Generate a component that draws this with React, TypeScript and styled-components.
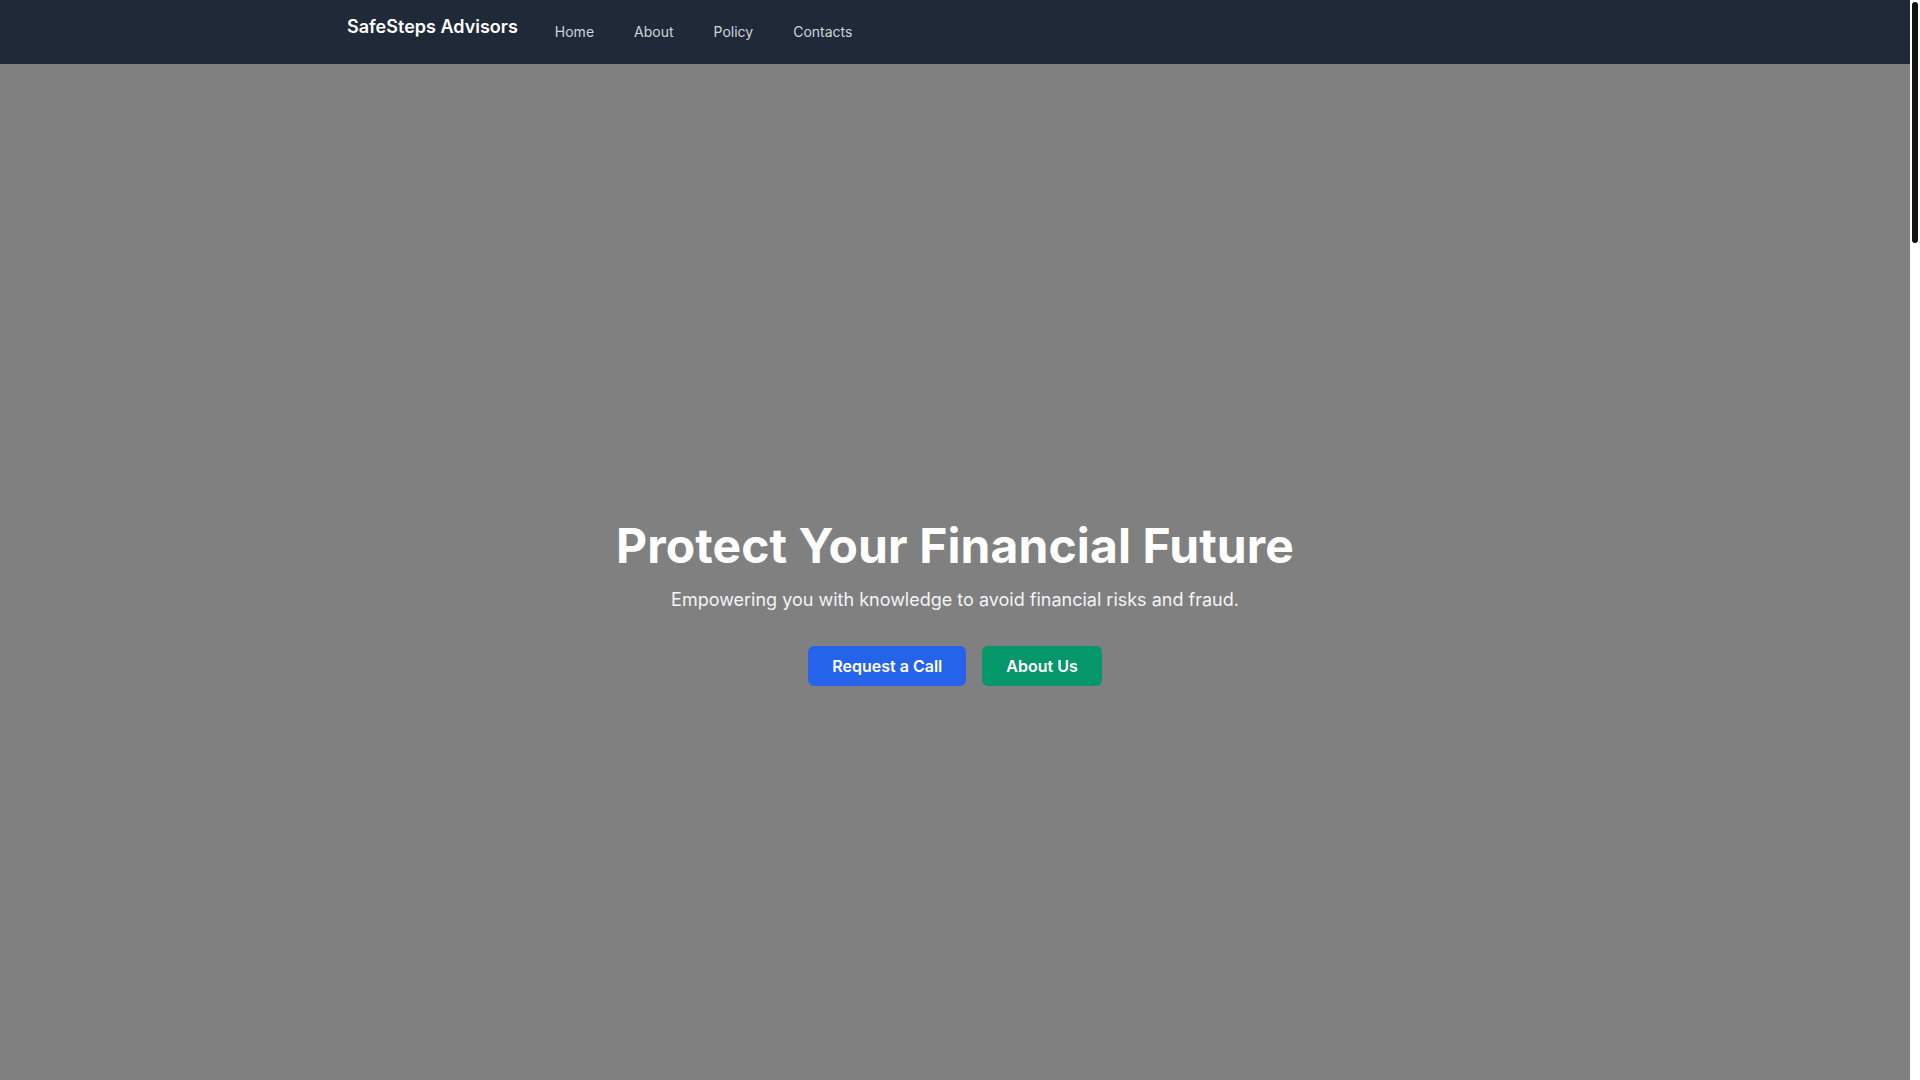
import React from "react";
import styled, { createGlobalStyle } from "styled-components";

const GlobalStyle = createGlobalStyle`
  html, body {
    margin: 0;
    padding: 0;
    height: 100%;
    overflow: hidden;
  }
  body {
    font-family: Inter, "Noto Sans", "Liberation Sans", sans-serif;
    background: #ffffff;
    color: #111827;
    -webkit-font-smoothing: antialiased;
  }
  * { box-sizing: border-box; }
`;

const Page = styled.div`
  display: flex;
  height: 100vh;
  overflow: hidden;
`;

const Main = styled.main`
  flex: 1;
  min-width: 0;
  height: 100vh;
  overflow: hidden;
`;

const ScrollGutter = styled.div`
  width: 10px;
  flex: none;
  height: 100vh;
  background: #ffffff;
  padding: 2px;
`;

const ScrollThumb = styled.div`
  width: 6px;
  height: 241px;
  border-radius: 3px;
  background: #111111;
`;

const Header = styled.header`
  background: #1f2937;
  height: 64px;
`;

const HeaderInner = styled.div`
  max-width: 1280px;
  height: 100%;
  margin: 0 auto;
  padding: 0 32px;
  display: flex;
  align-items: center;
`;

const Logo = styled.a`
  color: #ffffff;
  font-size: 18px;
  line-height: 28px;
  font-weight: 600;
  text-decoration: none;
  margin-right: 37px;
  padding-bottom: 10px;
`;

const NavList = styled.nav`
  display: flex;
  align-items: center;
  gap: 40px;
`;

const NavLink = styled.a`
  color: #d1d5db;
  font-size: 14px;
  line-height: 20px;
  font-weight: 400;
  text-decoration: none;
`;

const Hero = styled.section`
  height: 100vh;
  background: #808080;
  display: flex;
  flex-direction: column;
  align-items: center;
  justify-content: center;
  text-align: center;
  padding: 0 16px;
`;

const Title = styled.h1`
  margin: 0 0 16px;
  color: #ffffff;
  font-size: 48px;
  line-height: 48px;
  font-weight: 700;
  letter-spacing: 0.1px;
`;

const Subtitle = styled.p`
  margin: 0 0 32px;
  color: #f3f4f6;
  font-size: 18px;
  line-height: 28px;
  font-weight: 400;
`;

const ButtonRow = styled.div`
  display: flex;
  gap: 16px;
`;

const Button = styled.a<{ $tone: "blue" | "green" }>`
  display: inline-block;
  background: ${(p) => (p.$tone === "blue" ? "#2563eb" : "#059669")};
  color: #ffffff;
  font-size: 16px;
  line-height: 24px;
  font-weight: 600;
  padding: 8px 24px;
  border-radius: 6px;
  text-decoration: none;
`;

export default function App() {
  return (
    <Page>
      <GlobalStyle />
      <Main>
        <Header>
          <HeaderInner>
            <Logo href="#">SafeSteps Advisors</Logo>
            <NavList>
              <NavLink href="#">Home</NavLink>
              <NavLink href="#about">About</NavLink>
              <NavLink href="#policy">Policy</NavLink>
              <NavLink href="#contacts">Contacts</NavLink>
            </NavList>
          </HeaderInner>
        </Header>
        <Hero>
          <Title>Protect Your Financial Future</Title>
          <Subtitle>Empowering you with knowledge to avoid financial risks and fraud.</Subtitle>
          <ButtonRow>
            <Button $tone="blue" href="#contacts">Request a Call</Button>
            <Button $tone="green" href="#about">About Us</Button>
          </ButtonRow>
        </Hero>
      </Main>
      <ScrollGutter aria-hidden="true">
        <ScrollThumb />
      </ScrollGutter>
    </Page>
  );
}
